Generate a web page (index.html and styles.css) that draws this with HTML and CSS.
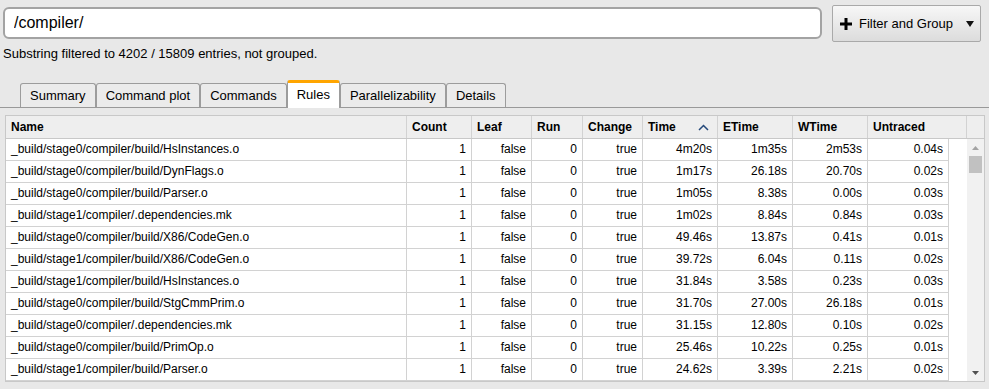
FILE: index.html
```html
<!DOCTYPE html>
<html lang="en">
<head>
    <meta charset="UTF-8">
    <title>Shake report - Rules</title>
    <link rel="stylesheet" href="styles.css">
</head>
<body>
    <div class="toolbar">
        <input class="search" type="text" value="/compiler/">
        <button class="filter-btn">
            <svg class="plus" width="12" height="12" viewBox="0 0 12 12"><path d="M4.5 0h3v4.5H12v3H7.5V12h-3V7.5H0v-3h4.5z"/></svg>
            <span class="filter-label">Filter and Group</span>
            <svg class="caret" width="8" height="6" viewBox="0 0 8 6"><path d="M0 0h8L4 6z"/></svg>
        </button>
    </div>

    <p class="status">Substring filtered to 4202 / 15809 entries, not grouped.</p>

    <ul class="tabs">
        <li class="tab">Summary</li>
        <li class="tab">Command plot</li>
        <li class="tab">Commands</li>
        <li class="tab active">Rules</li>
        <li class="tab">Parallelizability</li>
        <li class="tab">Details</li>
    </ul>

    <div class="grid">
        <div class="grid-head">
            <div class="th">Name</div>
            <div class="th">Count</div>
            <div class="th">Leaf</div>
            <div class="th">Run</div>
            <div class="th">Change</div>
            <div class="th th-sort">Time
                <svg width="11" height="7" viewBox="0 0 11 7"><polyline points="1,6 5.5,1.5 10,6"/></svg>
            </div>
            <div class="th">ETime</div>
            <div class="th">WTime</div>
            <div class="th">Untraced</div>
            <div class="th"></div>
        </div>

        <div class="grid-body">
            <div class="rows">
                <div class="row"><div class="td name">_build/stage0/compiler/build/HsInstances.o</div><div class="td">1</div><div class="td">false</div><div class="td">0</div><div class="td">true</div><div class="td">4m20s</div><div class="td">1m35s</div><div class="td">2m53s</div><div class="td">0.04s</div></div>
                <div class="row"><div class="td name">_build/stage0/compiler/build/DynFlags.o</div><div class="td">1</div><div class="td">false</div><div class="td">0</div><div class="td">true</div><div class="td">1m17s</div><div class="td">26.18s</div><div class="td">20.70s</div><div class="td">0.02s</div></div>
                <div class="row"><div class="td name">_build/stage0/compiler/build/Parser.o</div><div class="td">1</div><div class="td">false</div><div class="td">0</div><div class="td">true</div><div class="td">1m05s</div><div class="td">8.38s</div><div class="td">0.00s</div><div class="td">0.03s</div></div>
                <div class="row"><div class="td name">_build/stage1/compiler/.dependencies.mk</div><div class="td">1</div><div class="td">false</div><div class="td">0</div><div class="td">true</div><div class="td">1m02s</div><div class="td">8.84s</div><div class="td">0.84s</div><div class="td">0.03s</div></div>
                <div class="row"><div class="td name">_build/stage0/compiler/build/X86/CodeGen.o</div><div class="td">1</div><div class="td">false</div><div class="td">0</div><div class="td">true</div><div class="td">49.46s</div><div class="td">13.87s</div><div class="td">0.41s</div><div class="td">0.01s</div></div>
                <div class="row"><div class="td name">_build/stage1/compiler/build/X86/CodeGen.o</div><div class="td">1</div><div class="td">false</div><div class="td">0</div><div class="td">true</div><div class="td">39.72s</div><div class="td">6.04s</div><div class="td">0.11s</div><div class="td">0.02s</div></div>
                <div class="row"><div class="td name">_build/stage1/compiler/build/HsInstances.o</div><div class="td">1</div><div class="td">false</div><div class="td">0</div><div class="td">true</div><div class="td">31.84s</div><div class="td">3.58s</div><div class="td">0.23s</div><div class="td">0.03s</div></div>
                <div class="row"><div class="td name">_build/stage0/compiler/build/StgCmmPrim.o</div><div class="td">1</div><div class="td">false</div><div class="td">0</div><div class="td">true</div><div class="td">31.70s</div><div class="td">27.00s</div><div class="td">26.18s</div><div class="td">0.01s</div></div>
                <div class="row"><div class="td name">_build/stage0/compiler/.dependencies.mk</div><div class="td">1</div><div class="td">false</div><div class="td">0</div><div class="td">true</div><div class="td">31.15s</div><div class="td">12.80s</div><div class="td">0.10s</div><div class="td">0.02s</div></div>
                <div class="row"><div class="td name">_build/stage0/compiler/build/PrimOp.o</div><div class="td">1</div><div class="td">false</div><div class="td">0</div><div class="td">true</div><div class="td">25.46s</div><div class="td">10.22s</div><div class="td">0.25s</div><div class="td">0.01s</div></div>
                <div class="row"><div class="td name">_build/stage1/compiler/build/Parser.o</div><div class="td">1</div><div class="td">false</div><div class="td">0</div><div class="td">true</div><div class="td">24.62s</div><div class="td">3.39s</div><div class="td">2.21s</div><div class="td">0.02s</div></div>
            </div>
            <div class="gutter"></div>
            <div class="scrollbar">
                <div class="sb-button"><svg width="7" height="4" viewBox="0 0 7 4"><path d="M0 4L3.5 0 7 4z"/></svg></div>
                <div class="sb-thumb"></div>
                <div class="sb-track"></div>
                <div class="sb-button down"><svg width="7" height="4" viewBox="0 0 7 4"><path d="M0 0h7L3.5 4z"/></svg></div>
            </div>
        </div>
    </div>
</body>
</html>
```

FILE: styles.css
```css
/* reset */
* {
    box-sizing: border-box;
}

body {
    margin: 0;
    background: #e8e8e8;
    font-family: "Liberation Sans", Arial, sans-serif;
    color: #000;
    overflow: hidden;
}

/* top bar */
.toolbar {
    display: flex;
    align-items: flex-start;
    gap: 10px;
    padding: 5px 8px 0 3px;
}

.search {
    flex: 1;
    height: 32px;
    margin-top: 2px;
    padding: 0 9px;
    border: 2px solid #a3a3a3;
    border-radius: 6px;
    background: #fff;
    font: 16px "Liberation Sans", Arial, sans-serif;
    color: #000;
    outline: none;
}

.filter-btn {
    display: flex;
    align-items: center;
    width: 149px;
    height: 37px;
    padding: 0 0 0 7px;
    border: 1px solid #a9a9a9;
    border-radius: 2px;
    background: linear-gradient(#f7f7f7, #dcdcdc);
    font: 13px "Liberation Sans", Arial, sans-serif;
    color: #000;
}

.filter-btn .plus {
    fill: #000;
    margin-right: 7px;
}

.filter-btn .caret {
    fill: #111;
    margin-left: 13px;
}

.status {
    margin: 4px 0 0 3px;
    font-size: 13px;
    line-height: 15px;
}

/* tabs */
.tabs {
    display: flex;
    align-items: flex-end;
    height: 28px;
    margin: 19px 0 0;
    padding: 0 0 0 20px;
    list-style: none;
    border-bottom: 1px solid #999;
}

.tab {
    height: 24px;
    padding: 0 9px;
    border: 1px solid #9c9c9c;
    border-bottom: none;
    border-radius: 3px 3px 0 0;
    background: #ebebeb;
    font-size: 13px;
    line-height: 23px;
}

.tab.active {
    position: relative;
    height: 28px;
    margin-bottom: -1px;
    border-top: 3px solid #ffa500;
    background: #fff;
}

/* grid */
.grid {
    margin: 7px 4px 0 5px;
    border: 1px solid #c8c8c8;
    background: #fff;
    font-size: 12px;
}

.grid-head {
    display: grid;
    grid-template-columns: 401px 65px 60px 51px 60px 75px 75px 75px 99px 17px;
    background: #eee;
    border-bottom: 1px solid #c8c8c8;
}

.th {
    height: 22px;
    padding: 0 5px;
    border-right: 1px solid #d2d2d2;
    font-weight: bold;
    line-height: 22px;
    white-space: nowrap;
}

.th:last-child {
    border-right: none;
}

.th-sort {
    display: flex;
    align-items: center;
    justify-content: space-between;
    padding-right: 8px;
}

.th-sort polyline {
    fill: none;
    stroke: #24487a;
    stroke-width: 1.5;
}

.grid-body {
    display: flex;
    height: 242px;
    overflow: hidden;
}

.rows {
    width: 943px;
}

.row {
    display: grid;
    grid-template-columns: 401px 65px 60px 51px 60px 75px 75px 75px 81px;
}

.td {
    height: 22px;
    padding: 0 5px;
    border-right: 1px solid #d2d2d2;
    border-bottom: 1px solid #d2d2d2;
    line-height: 21px;
    text-align: right;
    white-space: nowrap;
}

.td.name {
    text-align: left;
}

.gutter {
    width: 18px;
}

/* scrollbar */
.scrollbar {
    display: flex;
    flex-direction: column;
    width: 17px;
    background: #f1f1f1;
}

.sb-button {
    display: flex;
    align-items: center;
    justify-content: center;
    height: 17px;
    fill: #a3a3a3;
}

.sb-button.down {
    fill: #505050;
}

.sb-thumb {
    height: 17px;
    margin: 0 2px;
    background: #c1c1c1;
}

.sb-track {
    flex: 1;
}
```
